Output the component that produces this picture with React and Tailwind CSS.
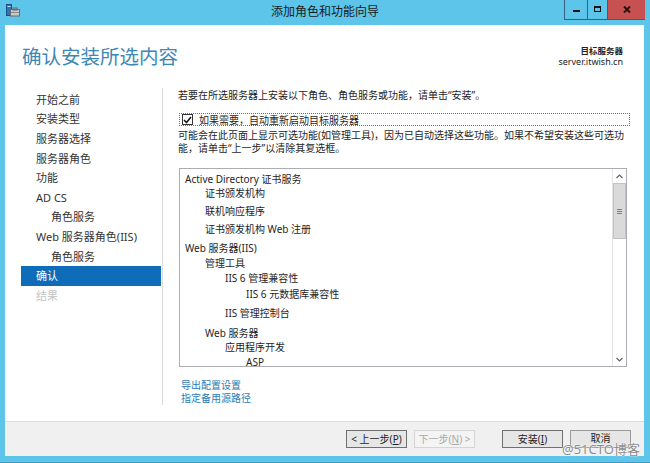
export default function App() {
  const navItems = [
    { t: "开始之前", indent: false },
    { t: "安装类型", indent: false },
    { t: "服务器选择", indent: false },
    { t: "服务器角色", indent: false },
    { t: "功能", indent: false },
    { t: "AD CS", indent: false },
    { t: "角色服务", indent: true },
    { t: "Web 服务器角色(IIS)", indent: false },
    { t: "角色服务", indent: true },
  ];

  return (
    <div className="relative w-[650px] h-[463px] overflow-hidden bg-[#5cc5e9] flex flex-col font-['Noto_Sans','Noto_Sans_CJK_SC',sans-serif] text-[#1e1e1e]">
      {/* Title bar */}
      <div className="relative h-[25px] flex items-center justify-center">
        <svg className="absolute left-[6px] top-[4px]" width="14" height="13" viewBox="0 0 14 13">
          <rect x="0.5" y="0.5" width="5" height="11" fill="#2f74b8" stroke="#1d4f86" strokeWidth="1" />
          <rect x="1.5" y="2" width="3" height="1" fill="#bfe0ff" />
          <rect x="4.5" y="5.5" width="9" height="6.5" fill="#c9c9c9" stroke="#6a6a6a" strokeWidth="1" />
          <rect x="7" y="4" width="4" height="2" fill="none" stroke="#6a6a6a" strokeWidth="1" />
          <rect x="5" y="8" width="8" height="1" fill="#8a8a8a" />
        </svg>
        <span className="text-[12px] leading-[14px] text-[#1a1a1a] pb-[1px]">添加角色和功能向导</span>
        <div className="absolute top-0 right-[5px] h-[20px] flex border-l border-b border-[#35627d]">
          <div className="w-[23px] h-full flex items-center justify-center border-r border-[#35627d]">
            <div className="w-[7px] h-[2px] bg-[#111] mt-[3px]" />
          </div>
          <div className="w-[20px] h-full flex items-center justify-center border-r border-[#35627d]">
            <div className="w-[7px] h-[6px] border border-[#111] border-t-2 -mt-[1px]" />
          </div>
          <div className="w-[37px] h-full bg-[#c75050] flex items-center justify-center">
            <svg width="8" height="7" viewBox="0 0 8 7" className="-mt-[1px]">
              <path d="M1 0.5 L7 6.5 M7 0.5 L1 6.5" stroke="#2a0f0f" strokeWidth="2" />
            </svg>
          </div>
        </div>
      </div>

      {/* Window body */}
      <div className="flex-1 ml-[5px] mr-[6px] bg-white flex flex-col">
        {/* Header */}
        <div className="h-[63px] flex justify-between">
          <div className="pl-[17px] pt-[20px] text-[19.5px] leading-[24px] text-[#3d87b4]">确认安装所选内容</div>
          <div className="pr-[21px] pt-[20px] flex flex-col items-end">
            <span className="text-[8.5px] leading-[11px] font-bold text-[#222]">目标服务器</span>
            <span className="text-[9px] leading-[11px] text-[#222]">server.itwish.cn</span>
          </div>
        </div>

        {/* Main */}
        <div className="flex-1 flex">
          <div className="w-[158px] h-[317px] border-r border-[#dadada] pt-[2px]">
            {navItems.map((n, i) => (
              <div
                key={i}
                className={`h-[19.6px] flex items-center ml-[16px] mr-[1px] text-[11px] leading-[14px] text-[#333] ${n.indent ? "pl-[30px]" : "pl-[15px]"}`}
              >
                {n.t}
              </div>
            ))}
            <div className="h-[19.6px] flex items-center ml-[16px] mr-[1px] pl-[15px] text-[11px] leading-[14px] text-white bg-[#0e6cb8]">
              确认
            </div>
            <div className="h-[19.6px] flex items-center ml-[16px] mr-[1px] pl-[15px] text-[11px] leading-[14px] text-[#c4c4c4]">
              结果
            </div>
          </div>

          <div className="flex-1 pl-[15px] pr-[14px] flex flex-col">
            <div className="h-[14px] text-[10px] leading-[14px] whitespace-nowrap">
              若要在所选服务器上安装以下角色、角色服务或功能，请单击“安装”。
            </div>
            <div className="mt-[11px] h-[13px] ml-[1px] border border-dotted border-[#6e6e6e] flex items-center">
              <div className="ml-[2px] w-[11px] h-[11px] border border-[#333] bg-white flex items-center justify-center">
                <svg width="9" height="8" viewBox="0 0 9 8">
                  <path d="M1 4 L3.5 6.5 L8 1" fill="none" stroke="#1a1a1a" strokeWidth="1.6" />
                </svg>
              </div>
              <span className="ml-[6px] text-[10px] leading-[12px] whitespace-nowrap">如果需要，自动重新启动目标服务器</span>
            </div>
            <div className="mt-[3px] text-[10px] leading-[12.5px] whitespace-nowrap">
              <div>可能会在此页面上显示可选功能(如管理工具)，因为已自动选择这些功能。如果不希望安装这些可选功</div>
              <div>能，请单击“上一步”以清除其复选框。</div>
            </div>

            {/* List box */}
            <div className="mt-[14px] ml-[1px] w-[448px] h-[199px] border border-[#abadb3] flex">
              <div className="flex-1 pt-[3px] text-[10px] leading-[14px] whitespace-nowrap overflow-hidden">
                <div className="h-[14px] pl-[5px]">Active Directory 证书服务</div>
                <div className="h-[14px] pl-[25px]">证书颁发机构</div>
                <div className="h-[14px] pl-[25px] mt-1">联机响应程序</div>
                <div className="h-[14px] pl-[25px] mt-1">证书颁发机构 Web 注册</div>
                <div className="h-[14px] pl-[5px] mt-[5px]">Web 服务器(IIS)</div>
                <div className="h-[14px] pl-[25px] mt-px">管理工具</div>
                <div className="h-[14px] pl-[45px] mt-px">IIS 6 管理兼容性</div>
                <div className="h-[14px] pl-[66px] mt-0.5">IIS 6 元数据库兼容性</div>
                <div className="h-[14px] pl-[45px] mt-[5px]">IIS 管理控制台</div>
                <div className="h-[14px] pl-[25px] mt-1.5">Web 服务器</div>
                <div className="h-[14px] pl-[45px]">应用程序开发</div>
                <div className="h-[14px] pl-[66px] mt-px">ASP</div>
              </div>
              <div className="w-[14px] h-full border-l border-[#e3e3e3] bg-white flex flex-col">
                <div className="h-[14px] flex items-center justify-center">
                  <svg width="7" height="5" viewBox="0 0 7 5">
                    <path d="M0.5 4 L3.5 1 L6.5 4" fill="none" stroke="#606060" strokeWidth="1.2" />
                  </svg>
                </div>
                <div className="h-[56px] bg-[#dadada] border border-[#c2c2c2] flex flex-col items-center justify-center gap-[1px]">
                  <div className="w-[5px] h-px bg-[#808080]" />
                  <div className="w-[5px] h-px bg-[#808080]" />
                  <div className="w-[5px] h-px bg-[#808080]" />
                </div>
                <div className="flex-1" />
                <div className="h-[14px] flex items-center justify-center">
                  <svg width="7" height="5" viewBox="0 0 7 5">
                    <path d="M0.5 1 L3.5 4 L6.5 1" fill="none" stroke="#606060" strokeWidth="1.2" />
                  </svg>
                </div>
              </div>
            </div>

            <div className="mt-[12px] ml-[3px] flex flex-col text-[10px] leading-[13px] text-[#2a7ab3]">
              <span>导出配置设置</span>
              <span>指定备用源路径</span>
            </div>
          </div>
        </div>

        {/* Footer */}
        <div className="h-[35px] bg-[#f0f0f0] border-t border-[#dcdcdc] flex justify-end items-start pt-[8px] pr-[13px]">
          <div className="w-[61px] h-[18px] border border-[#707070] bg-[#e6e6e6] flex items-center justify-center text-[10px] leading-[12px] text-[#1e1e1e]">
            &lt; 上一步(<span className="underline">P</span>)
          </div>
          <div className="ml-[7px] w-[61px] h-[18px] border border-[#d5d5d5] bg-[#f4f4f4] flex items-center justify-center text-[10px] leading-[12px] text-[#a8a8a8]">
            下一步(<span className="underline">N</span>) &gt;
          </div>
          <div className="ml-[27px] w-[61px] h-[18px] border border-[#707070] bg-[#e6e6e6] flex items-center justify-center text-[10px] leading-[12px] text-[#1e1e1e]">
            安装(<span className="underline">I</span>)
          </div>
          <div className="ml-[7px] w-[61px] h-[18px] border border-[#9a9a9a] bg-[#e6e6e6] flex items-center justify-center text-[10px] leading-[12px] text-[#1e1e1e] pb-[2px]">
            取消
          </div>
        </div>
      </div>
      <div className="h-[7px] border-b border-[#3d9cc2]" />

      {/* Watermark */}
      <div className="absolute left-[562px] top-[441px] text-[13px] leading-[16px] text-[#8c8c8c] [text-shadow:0_0_2px_#fff,0_0_1px_#fff]">
        @51CTO博客
      </div>
    </div>
  );
}
